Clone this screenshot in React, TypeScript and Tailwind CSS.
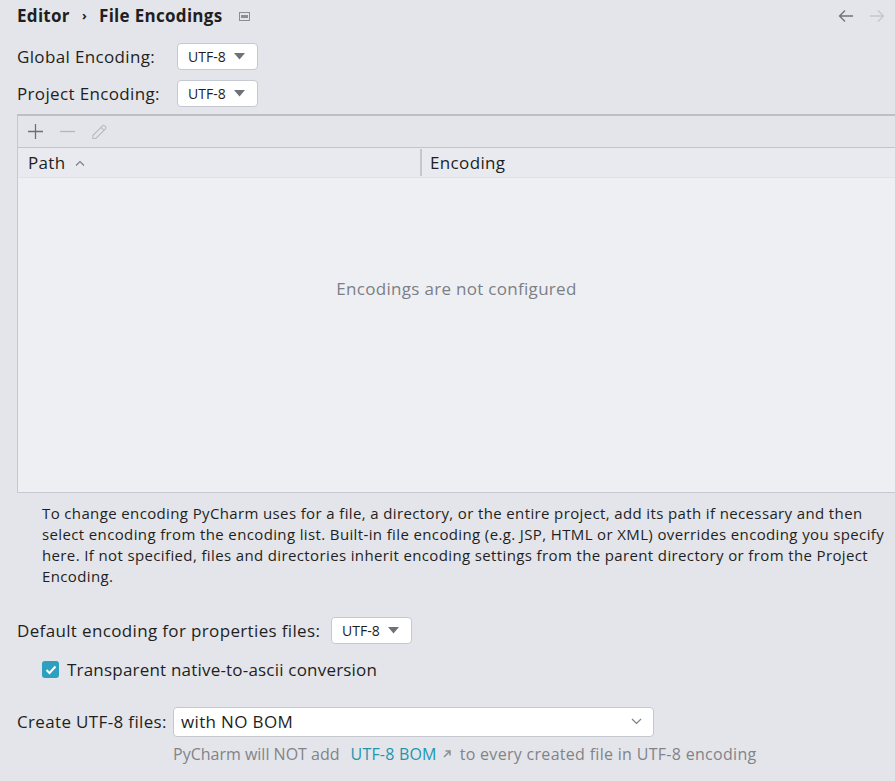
import React from 'react';

const font = { fontFamily: '"Open Sans", "Noto Sans", sans-serif' };

function SmallSelect({ value }: { value: string }) {
  return (
    <div className="flex h-[27px] w-[81px] items-center justify-between rounded-[4px] border border-[#c5c8ce] bg-white pl-[10px] pr-[12px] text-[14px] tracking-normal text-[#1e1f22]">
      <span>{value}</span>
      <svg width="11" height="7" viewBox="0 0 11 7">
        <path d="M0 0 L11 0 L5.5 6.5 Z" fill="#6e7278" />
      </svg>
    </div>
  );
}

function Header() {
  return (
    <div className="flex h-[32px] items-center justify-between pl-[17px] pr-[10px]">
      <div className="flex items-center text-[17px] font-bold tracking-[0.3px] text-[#1e1f22]">
        <span>Editor</span>
        <span className="mx-[12px] text-[13px] font-bold">›</span>
        <span>File Encodings</span>
        <svg className="ml-[16px]" width="11" height="9" viewBox="0 0 11 9">
          <rect x="0.5" y="0.5" width="10" height="8" fill="none" stroke="#8b8e94" />
          <rect x="2" y="3" width="7" height="3" fill="#8b8e94" />
        </svg>
      </div>
      <div className="flex items-center gap-[15px]">
        <svg width="16" height="14" viewBox="0 0 16 14">
          <path d="M15 7 H2 M7 1.5 L1.5 7 L7 12.5" fill="none" stroke="#6f737a" strokeWidth="1.3" />
        </svg>
        <svg width="16" height="14" viewBox="0 0 16 14">
          <path d="M1 7 H14 M9 1.5 L14.5 7 L9 12.5" fill="none" stroke="#c3c6cc" strokeWidth="1.3" />
        </svg>
      </div>
    </div>
  );
}

export default function App() {
  return (
    <div className="h-[781px] w-[895px] overflow-hidden bg-[#e4e5ea] text-[#1e1f22]" style={font}>
      <Header />

      <div className="mt-[11px] flex items-center pl-[17px] text-[17px] tracking-[0.35px]">
        <span className="w-[160px]">Global Encoding:</span>
        <SmallSelect value="UTF-8" />
      </div>
      <div className="mt-[10px] flex items-center pl-[17px] text-[17px] tracking-[0.35px]">
        <span className="w-[160px]">Project Encoding:</span>
        <SmallSelect value="UTF-8" />
      </div>

      {/* table panel */}
      <div className="ml-[17px] mt-[7px] flex h-[379px] flex-col border-t-2 border-l border-b border-t-[#bcc0c6] border-l-[#c5c8ce] border-b-[#c5c8ce]">
        <div className="flex h-[31px] items-center gap-[15px] pl-[9px]">
          <svg width="17" height="17" viewBox="0 0 17 17">
            <path d="M8.5 1 V16 M1 8.5 H16" stroke="#6b6f76" strokeWidth="1.3" />
          </svg>
          <svg width="17" height="17" viewBox="0 0 17 17">
            <path d="M1 8.5 H16" stroke="#b3b6bc" strokeWidth="1.3" />
          </svg>
          <svg width="17" height="17" viewBox="0 0 17 17">
            <path d="M4.8 15.5 L1.8 15.5 L1.8 12.5 L11.5 2.8 A1.5 1.5 0 0 1 13.6 2.8 L14.5 3.7 A1.5 1.5 0 0 1 14.5 5.8 Z M10 4.3 L13 7.3" fill="none" stroke="#b7babf" strokeWidth="1.1" />
          </svg>
        </div>
        <div className="flex h-[31px] items-center border-t border-b border-t-[#bfc5cc] border-b-[#dfe1e6] bg-[#e8eaef] text-[17px] tracking-[0.35px]">
          <div className="flex w-[402px] items-center pl-[10px]">
            <span>Path</span>
            <svg className="ml-[9px]" width="10" height="6" viewBox="0 0 10 6">
              <path d="M1 5.5 L5 1.5 L9 5.5" fill="none" stroke="#7a7e85" strokeWidth="1.1" />
            </svg>
          </div>
          <div className="h-[27px] w-[2px] bg-[#c4c7cc]" />
          <span className="pl-[8px]">Encoding</span>
        </div>
        <div className="flex flex-1 justify-center bg-[#eeeff3] pt-[98px] text-[17px] tracking-[0.3px] text-[#7c7f85]">
          Encodings are not configured
        </div>
      </div>

      <div className="mt-[10px] pl-[42px] text-[15px] leading-[21px] tracking-[0.37px] text-[#1e1f22]">
        <div className="whitespace-nowrap">To change encoding PyCharm uses for a file, a directory, or the entire project, add its path if necessary and then</div>
        <div className="whitespace-nowrap">select encoding from the encoding list. Built-in file encoding (e.g. JSP, HTML or XML) overrides encoding you specify</div>
        <div className="whitespace-nowrap">here. If not specified, files and directories inherit encoding settings from the parent directory or from the Project</div>
        <div className="whitespace-nowrap">Encoding.</div>
      </div>

      <div className="mt-[30px] flex items-center pl-[17px] text-[17px] tracking-[0.35px]">
        <span className="w-[314px]">Default encoding for properties files:</span>
        <SmallSelect value="UTF-8" />
      </div>

      <div className="mt-[13px] flex items-center pl-[42px]">
        <div className="flex h-[17px] w-[17px] items-center justify-center rounded-[3px] bg-[#2d9fbf]">
          <svg width="12" height="10" viewBox="0 0 12 10">
            <path d="M1.5 5 L4.5 8 L10.5 1.5" fill="none" stroke="white" strokeWidth="2" />
          </svg>
        </div>
        <span className="ml-[8px] text-[17px] tracking-[0.2px]">Transparent native-to-ascii conversion</span>
      </div>

      <div className="mt-[24px] flex items-center pl-[17px] text-[17px] tracking-[0.35px]">
        <span className="w-[156px]">Create UTF-8 files:</span>
        <div className="flex h-[30px] w-[481px] items-center justify-between rounded-[4px] border border-[#c5c8ce] bg-white pl-[7px] pr-[11px]">
          <span>with NO BOM</span>
          <svg width="11" height="7" viewBox="0 0 11 7">
            <path d="M1 1 L5.5 5.5 L10 1" fill="none" stroke="#7c8087" strokeWidth="1.2" />
          </svg>
        </div>
      </div>
      <div className="mt-[5px] flex items-center pl-[173px] text-[16px] text-[#818389]">
        <span>PyCharm will NOT add</span>
        <span className="ml-[11px] tracking-[0.2px] text-[#2196b0]">UTF-8 BOM</span>
        <svg className="ml-[6px] mr-[9px]" width="8" height="8" viewBox="0 0 8 8">
          <path d="M1 7 L6 2 M2.5 1 H7 V5.5" fill="none" stroke="#8a8d93" strokeWidth="1.5" />
        </svg>
        <span className="tracking-[0.3px]">to every created file in UTF-8 encoding</span>
      </div>
    </div>
  );
}
